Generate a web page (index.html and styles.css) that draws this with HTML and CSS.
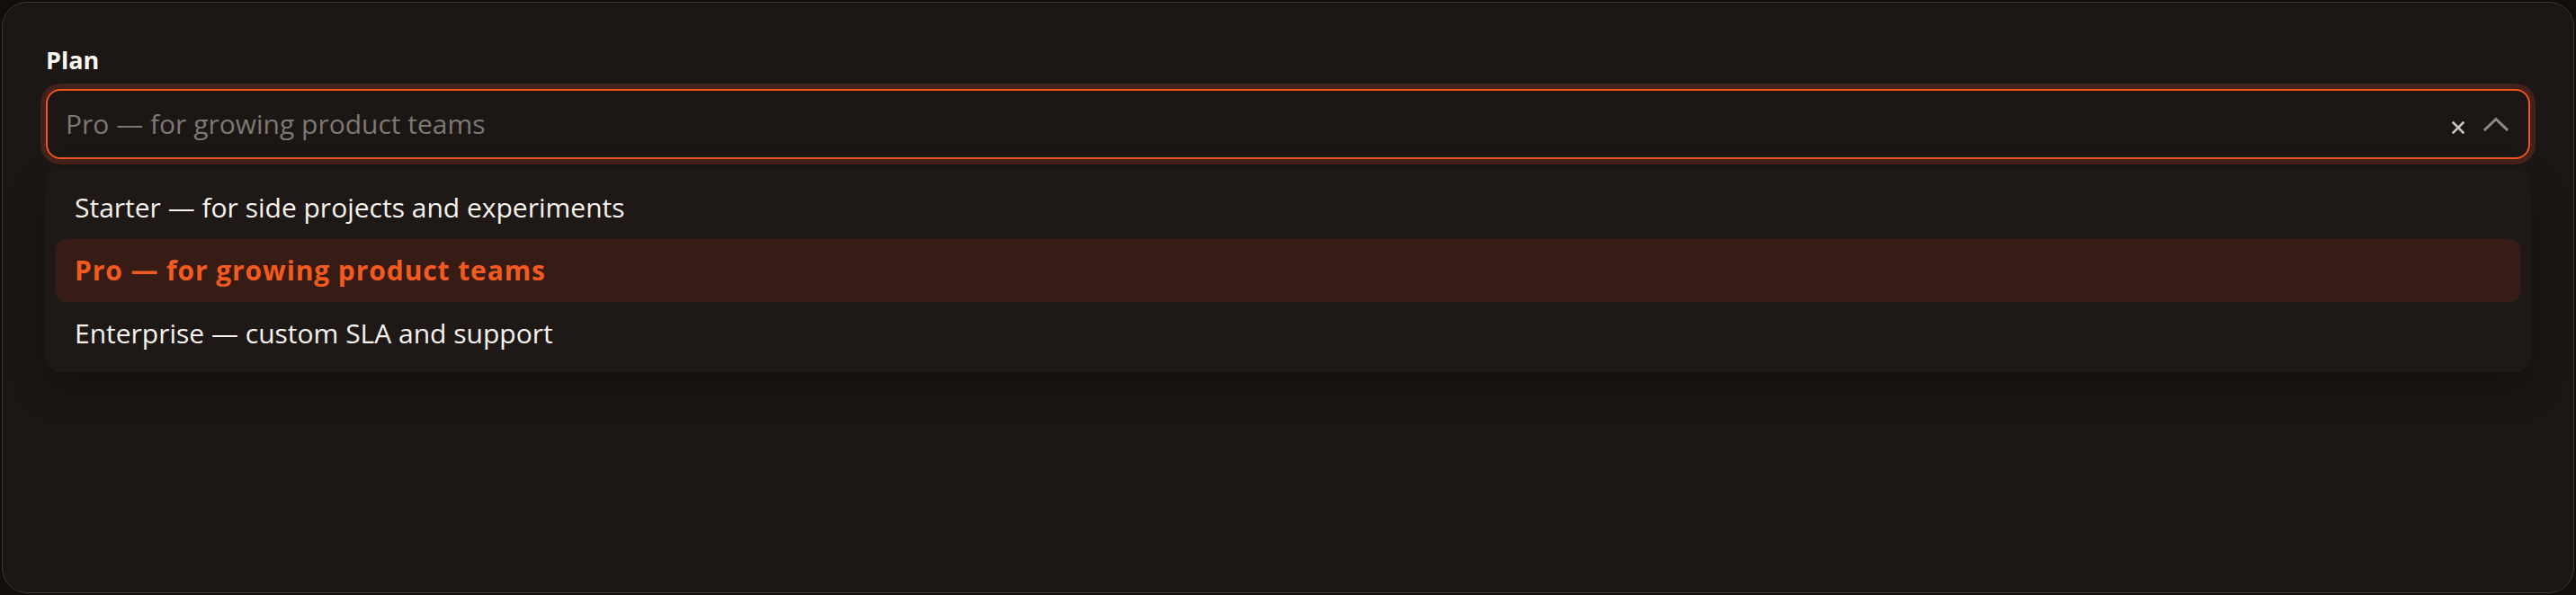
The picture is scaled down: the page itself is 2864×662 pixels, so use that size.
FILE: index.html
```html
<!DOCTYPE html>
<html lang="en">
<head>
<meta charset="utf-8">
<title>Plan select</title>
<link rel="stylesheet" href="styles.css">
</head>
<body>
<div class="card">
  <div class="label">Plan</div>
  <div class="combo">
    <div class="field">
      <span class="value">Pro — for growing product teams</span>
      <span class="actions">
        <svg class="clear" width="14" height="14" viewBox="0 0 14 14" aria-hidden="true"><path d="M1.5 1.5 L12.5 12.5 M12.5 1.5 L1.5 12.5" stroke="currentColor" stroke-width="2.6" stroke-linecap="square" fill="none"/></svg>
        <svg class="chevron" width="28" height="16" viewBox="0 0 28 16" aria-hidden="true"><path d="M2 14 L14 2.5 L26 14" stroke="currentColor" stroke-width="3" stroke-linecap="square" stroke-linejoin="miter" fill="none"/></svg>
      </span>
    </div>
    <ul class="menu">
      <li class="option">Starter — for side projects and experiments</li>
      <li class="option active">Pro — for growing product teams</li>
      <li class="option">Enterprise — custom SLA and support</li>
    </ul>
  </div>
</div>
</body>
</html>
```
FILE: styles.css
```css
html, body {
  margin: 0;
  padding: 0;
  height: 100%;
  background: #120e0c;
}
body {
  font-family: "Open Sans", "Noto Sans", sans-serif;
  padding: 2px;
  box-sizing: border-box;
}
.card {
  box-sizing: border-box;
  height: 658px;
  border: 1px solid #3d3531;
  border-radius: 28px;
  background: #1c1714;
  padding: 46px 48px 0 48px;
}
.label {
  font-size: 27px;
  line-height: 36px;
  font-weight: 700;
  color: #fbf7f3;
  margin-bottom: 14px;
}
.field {
  box-sizing: border-box;
  height: 78px;
  border: 2px solid #f0561e;
  border-radius: 16px;
  box-shadow: 0 0 0 6px #43221a;
  display: flex;
  align-items: center;
  padding: 0 22px 0 20px;
}
.value {
  flex: 1;
  font-size: 30px;
  line-height: 36px;
  color: #7d7873;
}
.actions {
  display: flex;
  align-items: center;
  gap: 21px;
}
.clear {
  color: #c9c5c1;
  margin-top: 8px;
}
.chevron {
  color: #8e8985;
}
.menu {
  list-style: none;
  margin: 11px 0 0 0;
  padding: 8px 11px;
  background: #1e1916;
  border-radius: 16px;
  box-shadow: 0 18px 40px rgba(0, 0, 0, 0.28);
}
.option {
  height: 70px;
  display: flex;
  align-items: center;
  padding: 0 21px;
  border-radius: 11px;
  font-size: 30px;
  line-height: 36px;
  color: #f8f3ee;
}
.option.active {
  background: #361c15;
  color: #f25a1f;
  font-weight: 700;
  letter-spacing: 0.9px;
}
```
